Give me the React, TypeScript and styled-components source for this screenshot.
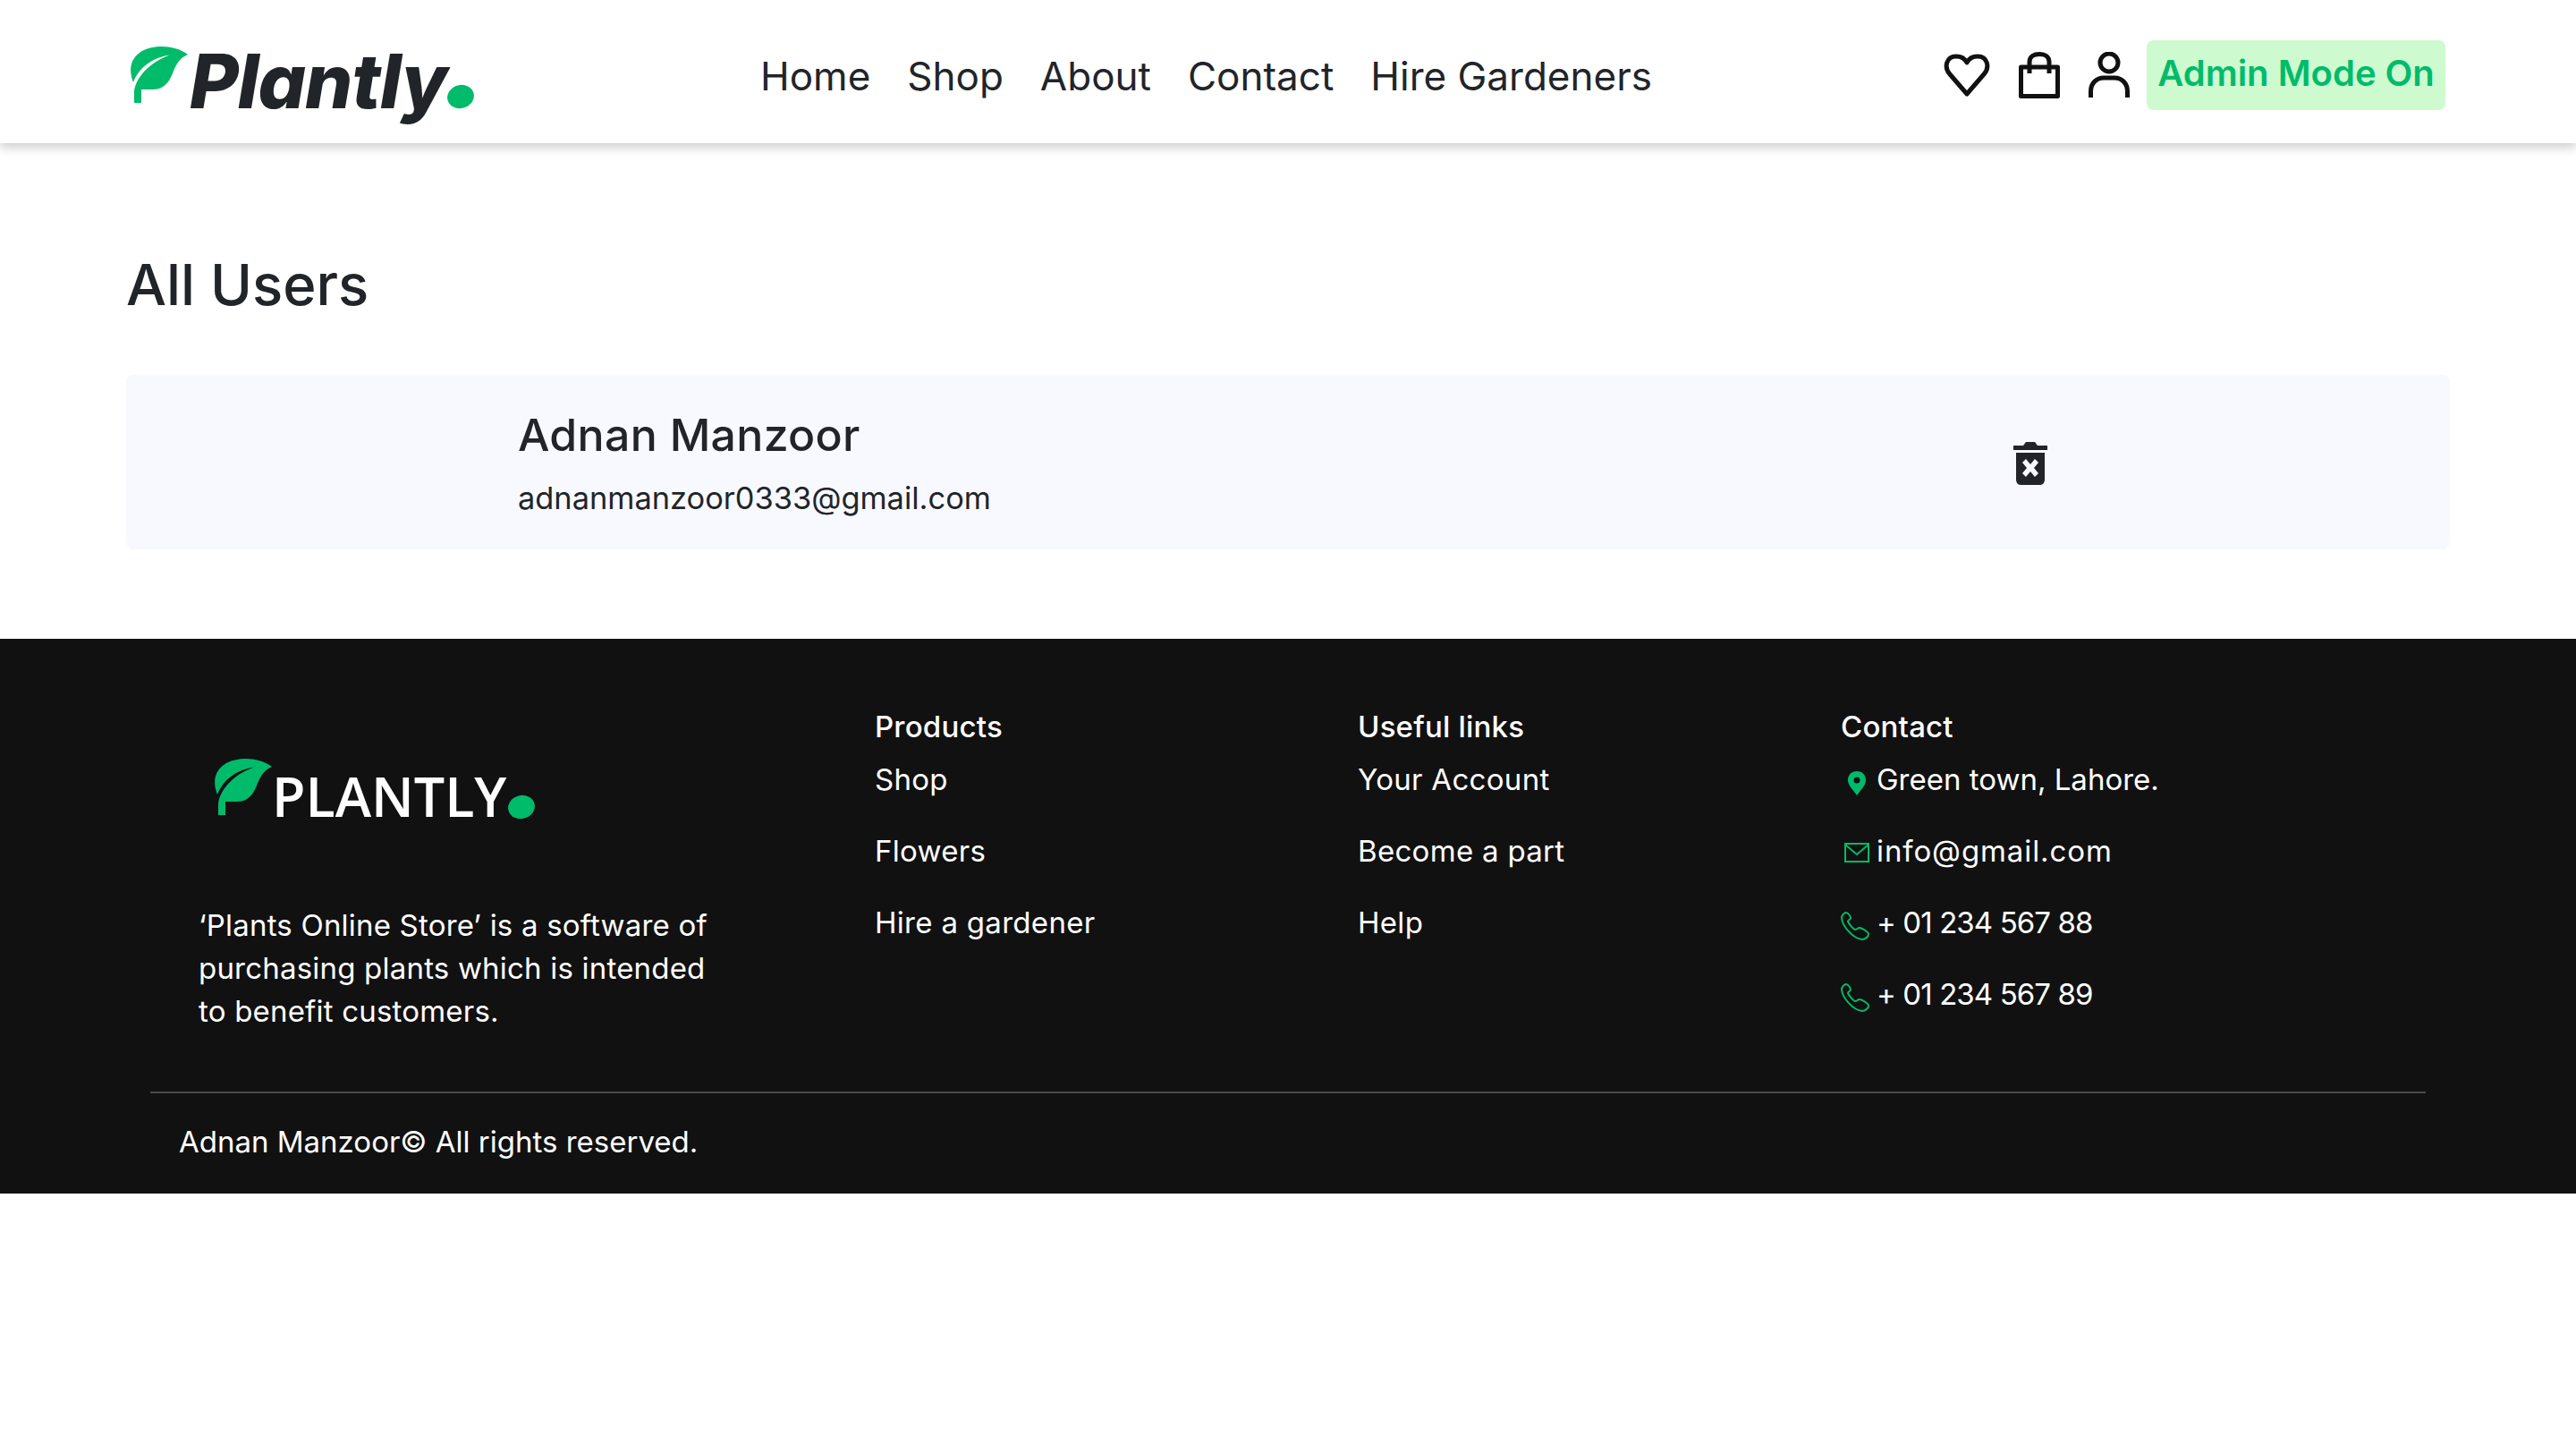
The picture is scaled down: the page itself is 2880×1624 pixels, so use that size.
import styled, { createGlobalStyle } from 'styled-components'

const GlobalStyle = createGlobalStyle`
  html, body {
    margin: 0;
    padding: 0;
    background: #ffffff;
    font-family: 'Inter', 'Liberation Sans', sans-serif;
    color: #212529;
  }
  * { box-sizing: border-box; }
`

const green = '#00bb6a'

const Header = styled.header`
  height: 160px;
  display: flex;
  align-items: center;
  padding: 0 146px 0 146px;
  background: #ffffff;
  box-shadow: 0 4px 12px rgba(0, 0, 0, 0.22);
  position: relative;
`

const Logo = styled.div`
  width: 704px;
  display: flex;
  align-items: flex-start;
  height: 100px;
  padding-top: 22px;
`

const LogoText = styled.span`
  font-family: 'Inter', sans-serif;
  font-size: 84px;
  line-height: 100px;
  font-weight: 800;
  font-style: italic;
  letter-spacing: -1px;
  color: #212529;
  margin: -11px 0 0 2px;
`

const LogoDot = styled.span<{ $top: number }>`
  display: block;
  width: 30px;
  height: 26px;
  margin-top: ${p => p.$top}px;
  border-radius: 50%;
  background: ${green};
  transform: rotate(-14deg);
`

const Nav = styled.nav`
  display: flex;
  gap: 41px;
  flex: 1;
`

const NavLink = styled.a`
  font-size: 44px;
  line-height: 60px;
  color: #212529;
  margin-top: 9px;
`

const Actions = styled.div`
  display: flex;
  align-items: center;
  margin-top: 7px;
`

const IconBtn = styled.span`
  display: flex;
  margin-right: 32px;
  color: #111111;
  &:nth-child(3) { margin-right: 19px; }
`

const AdminBadge = styled.div`
  width: 334px;
  height: 78px;
  padding-bottom: 5px;
  border-radius: 8px;
  background: #cdfacf;
  color: ${green};
  font-size: 40px;
  font-weight: 600;
  display: flex;
  align-items: center;
  justify-content: center;
  white-space: nowrap;
`

const Main = styled.main`
  padding: 0 141px 100px;
`

const PageTitle = styled.h1`
  margin: 0;
  padding-top: 124px;
  font-size: 63.500px;
  line-height: 68px;
  font-weight: 500;
  color: #212529;
  height: 259px;
`

const UserCard = styled.section`
  height: 195px;
  width: 2598px;
  background: #f8f9ff;
  border-radius: 8px;
  display: grid;
  grid-template-columns: 438px 1fr 120px 409px;
  align-items: center;
`

const UserInfo = styled.div`
  grid-column: 2;
  display: flex;
  flex-direction: column;
  gap: 14px;
  margin-top: -4px;
`

const UserName = styled.div`
  font-size: 50px;
  line-height: 70px;
  font-weight: 500;
  letter-spacing: 0.300px;
  color: #212529;
`

const UserEmail = styled.div`
  font-size: 34.400px;
  line-height: 44px;
  color: #212529;
`

const TrashBtn = styled.span`
  grid-column: 3;
  display: flex;
  justify-content: center;
`

const Footer = styled.footer`
  height: 620px;
  background: #111111;
  color: #ffffff;
  padding-top: 74px;
`

const FooterGrid = styled.div`
  display: grid;
  grid-template-columns: 978px 540px 540px 1fr;
  height: 432px;
`

const Brand = styled.div`
  padding-left: 222px;
`

const BrandLogo = styled.div`
  display: flex;
  align-items: flex-start;
  height: 80px;
  margin: 60px 0 0 18px;
`

const BrandText = styled.span`
  font-family: 'Open Sans', sans-serif;
  font-weight: 600;
  font-size: 61px;
  line-height: 80px;
  margin: 2px 2px 0 0;
  color: #ffffff;
`

const BrandBlurb = styled.p`
  margin: 82px 0 0;
  width: 590px;
  font-size: 33px;
  line-height: 48px;
  letter-spacing: 0.200px;
`

const Column = styled.div`
  display: flex;
  flex-direction: column;
`

const ColumnTitle = styled.div`
  font-size: 33px;
  line-height: 48px;
  font-weight: 500;
  letter-spacing: 0.200px;
  margin-bottom: 11px;
`

const ColumnLink = styled.div<{ $tracking?: number }>`
  font-size: 33px;
  line-height: 48px;
  height: 80px;
  letter-spacing: ${p => p.$tracking ?? 0.3}px;
  display: flex;
  align-items: flex-start;
`

const ContactIcon = styled.span<{ $top?: number; $left?: number }>`
  width: 44px;
  margin-left: ${p => p.$left ?? -4}px;
  margin-right: ${p => -4 - (p.$left ?? -4)}px;
  display: flex;
  justify-content: center;
  padding-top: ${p => p.$top ?? 15}px;
`

const Rule = styled.div`
  height: 2px;
  margin: 0 168px;
  background: #4a4a4a;
`

const Copyright = styled.div`
  padding: 30px 0 0 200px;
  font-size: 33px;
  line-height: 48px;
`

const Leaf = () => (
  <svg width="64" height="64" viewBox="0 0 64 64" fill={green}>
    <path d="M4 63 V50 C6 34 22 17 44 9.500 C26 12 10 22 3 40 C-2 28 -1 15 10 7 C22 -2 48 -3 64 9 C54 13 50 22 47 30 C42 42 36 48 24 48 H12 V63 Z" />
  </svg>
)

const HeartIcon = () => (
  <svg width="52" height="48" viewBox="0 0 52 48" fill="none" stroke="currentColor" strokeWidth="5" strokeLinejoin="round">
    <path d="M26 45 L7 23 C0 15 3 3 14 3 C20 3 24 6 26 10 C28 6 32 3 38 3 C49 3 52 15 45 23 Z" />
  </svg>
)

const BagIcon = () => (
  <svg width="46" height="52" viewBox="0 0 46 52" fill="none" stroke="currentColor" strokeWidth="5" strokeLinejoin="round">
    <path d="M2.500 17 H43.500 V49.500 H2.500 Z" />
    <path d="M12 24 V11 C12 5 17 2.500 23 2.500 C29 2.500 34 5 34 11 V24" />
  </svg>
)

const UserIcon = () => (
  <svg width="46" height="52" viewBox="0 0 46 52" fill="none" stroke="currentColor" strokeWidth="5">
    <ellipse cx="23" cy="12" rx="10" ry="10" />
    <path d="M2.500 51 V44 C2.500 35 9 29 17 29 H29 C37 29 43.500 35 43.500 44 V51" />
  </svg>
)

const TrashIcon = () => (
  <svg width="38" height="50" viewBox="0 0 38 50" fill="#212529">
    <path d="M0 6 H11 L14 2 H24 L27 6 H38 V11 H0 Z" />
    <path d="M3 14 H35 V44 C35 47 33 50 30 50 H8 C5 50 3 47 3 44 Z M14 21 L10 25 L15 31 L10 37 L14 41 L19 35 L24 41 L28 37 L23 31 L28 25 L24 21 L19 27 Z" fillRule="evenodd" />
  </svg>
)

const PinIcon = () => (
  <svg width="20" height="27" viewBox="0 0 20 27" fill={green}>
    <path d="M10 0 C4 0 0 4 0 10 C0 16 6 21 10 27 C14 21 20 16 20 10 C20 4 16 0 10 0 Z M10 6.500 A3.500 3.500 0 1 1 10 13.500 A3.500 3.500 0 1 1 10 6.500 Z" fillRule="evenodd" />
  </svg>
)

const MailIcon = () => (
  <svg width="28" height="22" viewBox="0 0 28 22" fill="none" stroke={green} strokeWidth="2">
    <path d="M1 1 H27 V21 H1 Z M1 2 L14 13 L27 2" />
  </svg>
)

const PhoneIcon = () => (
  <svg width="32" height="32" viewBox="0 0 32 32" fill="none" stroke={green} strokeWidth="2" strokeLinejoin="round">
    <path d="M6 1 C4 1 1 4 1 7 C2 17 14 30 24 31 C27 31 31 28 31 25 C31 23 24 18 21 18 C19 18 18 20 16 20 C13 19 9 13 8 11 C8 9 11 9 11 7 C11 5 8 1 6 1 Z" />
  </svg>
)

const products = ['Shop', 'Flowers', 'Hire a gardener']
const usefulLinks = ['Your Account', 'Become a part', 'Help']
const navLinks = ['Home', 'Shop', 'About', 'Contact', 'Hire Gardeners']

export default function App() {
  return (
    <>
      <GlobalStyle />
      <Header>
        <Logo>
          <Leaf />
          <LogoText>Plantly</LogoText>
          <LogoDot $top={43} />
        </Logo>
        <Nav>
          {navLinks.map(link => <NavLink key={link}>{link}</NavLink>)}
        </Nav>
        <Actions>
          <IconBtn><HeartIcon /></IconBtn>
          <IconBtn><BagIcon /></IconBtn>
          <IconBtn><UserIcon /></IconBtn>
          <AdminBadge>Admin Mode On</AdminBadge>
        </Actions>
      </Header>
      <Main>
        <PageTitle>All Users</PageTitle>
        <UserCard>
          <UserInfo>
            <UserName>Adnan Manzoor</UserName>
            <UserEmail>adnanmanzoor0333@gmail.com</UserEmail>
          </UserInfo>
          <TrashBtn><TrashIcon /></TrashBtn>
        </UserCard>
      </Main>
      <Footer>
        <FooterGrid>
          <Brand>
            <BrandLogo>
              <Leaf />
              <BrandText>PLANTLY</BrandText>
              <LogoDot $top={41} />
            </BrandLogo>
            <BrandBlurb>‘Plants Online Store’ is a software of purchasing plants which is intended to benefit customers.</BrandBlurb>
          </Brand>
          <Column>
            <ColumnTitle>Products</ColumnTitle>
            {products.map(item => <ColumnLink key={item}>{item}</ColumnLink>)}
          </Column>
          <Column>
            <ColumnTitle>Useful links</ColumnTitle>
            {usefulLinks.map(item => <ColumnLink key={item}>{item}</ColumnLink>)}
          </Column>
          <Column>
            <ColumnTitle>Contact</ColumnTitle>
            <ColumnLink $tracking={0}><ContactIcon><PinIcon /></ContactIcon>Green town, Lahore.</ColumnLink>
            <ColumnLink $tracking={0.9}><ContactIcon><MailIcon /></ContactIcon>info@gmail.com</ColumnLink>
            <ColumnLink $tracking={-0.9}><ContactIcon $top={12} $left={-6}><PhoneIcon /></ContactIcon>+ 01 234 567 88</ColumnLink>
            <ColumnLink $tracking={-0.9}><ContactIcon $top={12} $left={-6}><PhoneIcon /></ContactIcon>+ 01 234 567 89</ColumnLink>
          </Column>
        </FooterGrid>
        <Rule />
        <Copyright>Adnan Manzoor© All rights reserved.</Copyright>
      </Footer>
    </>
  )
}
